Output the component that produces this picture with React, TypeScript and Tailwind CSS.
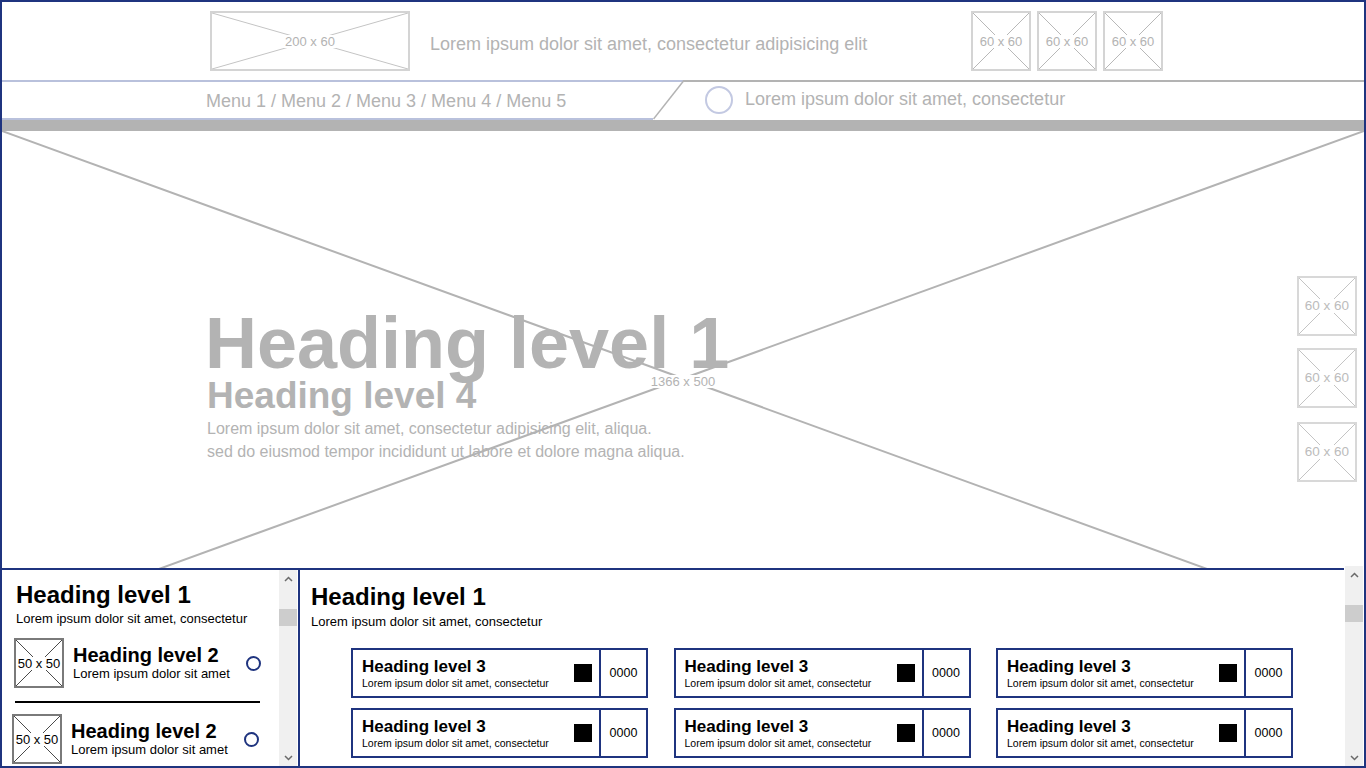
import React from "react";

function XBox({
  className,
  lineColor,
  label,
  labelClass,
  strokeWidth = 1,
}: {
  className: string;
  lineColor: string;
  label: string;
  labelClass: string;
  strokeWidth?: number;
}) {
  return (
    <div className={`relative shrink-0 bg-white ${className}`}>
      <svg
        className="absolute inset-0 h-full w-full"
        viewBox="0 0 100 100"
        preserveAspectRatio="none"
      >
        <line x1="0" y1="0" x2="100" y2="100" stroke={lineColor} strokeWidth={strokeWidth} vectorEffect="non-scaling-stroke" />
        <line x1="100" y1="0" x2="0" y2="100" stroke={lineColor} strokeWidth={strokeWidth} vectorEffect="non-scaling-stroke" />
      </svg>
      <div className="absolute inset-0 flex items-center justify-center">
        <span className={`bg-white px-[1px] leading-none ${labelClass}`}>{label}</span>
      </div>
    </div>
  );
}

function Chevron({ up }: { up: boolean }) {
  return (
    <svg width="9" height="6" viewBox="0 0 9 6">
      {up ? (
        <polyline points="1,5 4.5,1.5 8,5" fill="none" stroke="#6a6a6a" strokeWidth="1.5" />
      ) : (
        <polyline points="1,1 4.5,4.5 8,1" fill="none" stroke="#6a6a6a" strokeWidth="1.5" />
      )}
    </svg>
  );
}

function Scrollbar({ className }: { className: string }) {
  return (
    <div className={`flex w-[18px] shrink-0 flex-col bg-[#f0f0f0] ${className}`}>
      <div className="flex h-[17px] items-center justify-center">
        <Chevron up />
      </div>
      <div className="mt-[22px] h-[17px] bg-[#cdcdcd]" />
      <div className="flex-1" />
      <div className="flex h-[17px] items-center justify-center">
        <Chevron up={false} />
      </div>
    </div>
  );
}

function Circle({ className }: { className: string }) {
  return <div className={`shrink-0 rounded-full ${className}`} />;
}

function ListItem({ shift }: { shift: boolean }) {
  return (
    <div className={`flex items-center ${shift ? "-ml-[2px]" : ""}`}>
      <XBox
        className="h-[50px] w-[50px] border-2 border-[#7a7a7a]"
        lineColor="#4a4a4a"
        label="50 x 50"
        labelClass="text-[13px] text-black"
      />
      <div className="ml-[9px] flex flex-1 flex-col">
        <div className="text-[20px] font-bold leading-[22px] text-black">Heading level 2</div>
        <div className="text-[13px] leading-[16px] text-black">Lorem ipsum dolor sit amet</div>
      </div>
      <Circle className="mr-[1px] h-[15px] w-[15px] border-2 border-[#1f347f]" />
    </div>
  );
}

function Card() {
  return (
    <div className="flex h-[50px] border-2 border-[#1f347f]">
      <div className="flex flex-1 items-center border-r-2 border-[#1f347f] pl-[9px] pr-[7px]">
        <div className="flex flex-1 flex-col">
          <div className="text-[17px] font-bold leading-[20px] text-black">Heading level 3</div>
          <div className="text-[10.5px] leading-[13px] text-black">Lorem ipsum dolor sit amet, consectetur</div>
        </div>
        <div className="h-[18px] w-[18px] bg-black" />
      </div>
      <div className="flex w-[45px] items-center justify-center text-[12.5px] text-black">0000</div>
    </div>
  );
}

export default function App() {
  return (
    <div className="flex h-[768px] w-[1366px] flex-col overflow-hidden border-2 border-[#1f347f] bg-white font-['Liberation_Sans',Arial,sans-serif]">
      {/* Header */}
      <div className="flex h-[78px] shrink-0 items-center pl-[208px]">
        <XBox
          className="h-[60px] w-[200px] border-2 border-[#d4d4d4]"
          lineColor="#c4c4c4"
          label="200 x 60"
          labelClass="text-[13px] text-[#b3b3b3]"
        />
        <div className="ml-[20px] w-[541px] pt-[6px] text-[18px] text-[#b3b3b3]">
          Lorem ipsum dolor sit amet, consectetur adipisicing elit
        </div>
        <div className="flex gap-[6px]">
          {[0, 1, 2].map((i) => (
            <XBox
              key={i}
              className="h-[60px] w-[60px] border-2 border-[#d4d4d4]"
              lineColor="#b8b8b8"
              label="60 x 60"
              labelClass="text-[13px] text-[#b3b3b3]"
            />
          ))}
        </div>
      </div>

      {/* Nav */}
      <div className="flex h-[40px] shrink-0">
        <div className="flex w-[651px] items-center border-y-2 border-[#b9c1dc] pl-[204px] pt-[2px] text-[18px] text-[#b3b3b3]">
          Menu 1 / Menu 2 / Menu 3 / Menu 4 / Menu 5
        </div>
        <svg width="32" height="40" viewBox="0 0 32 40" className="shrink-0">
          <line x1="0" y1="1" x2="30" y2="1" stroke="#b9c1dc" strokeWidth="2" />
          <line x1="30" y1="1" x2="32" y2="1" stroke="#b3b3b3" strokeWidth="2" />
          <line x1="30.5" y1="1" x2="0.5" y2="39" stroke="#b3b3b3" strokeWidth="1.5" />
        </svg>
        <div className="flex flex-1 items-center border-t-2 border-[#b3b3b3] pb-[3px]">
          <Circle className="ml-[20px] h-[28px] w-[28px] border-2 border-[#c3c9e2]" />
          <div className="ml-[12px] text-[18px] text-[#b3b3b3]">Lorem ipsum dolor sit amet, consectetur</div>
        </div>
      </div>

      {/* Gray bar */}
      <div className="h-[11px] shrink-0 bg-[#b3b3b3]" />

      {/* Hero */}
      <div className="relative h-[437px] shrink-0 overflow-hidden">
        <svg className="absolute left-0 top-0" width="1362" height="500" viewBox="0 0 1362 500">
          <line x1="0" y1="0" x2="1362" y2="495" stroke="#b3b3b3" strokeWidth="2" />
          <line x1="1362" y1="0" x2="0" y2="495" stroke="#b3b3b3" strokeWidth="2" />
        </svg>
        <div className="absolute left-0 top-0 flex h-[500px] w-[1362px] items-center justify-center">
          <span className="bg-white px-[1px] text-[13px] leading-none text-[#b3b3b3]">1366 x 500</span>
        </div>
        <div className="relative flex h-full">
          <div className="flex flex-1 flex-col pl-[203px] pt-[176px] text-[#b3b3b3]">
            <div className="text-[72px] font-bold leading-[72px]">Heading level 1</div>
            <div className="-mt-[1px] ml-[2px] text-[37px] font-bold leading-[36px]">Heading level 4</div>
            <div className="ml-[2px] mt-[3px] text-[16px] leading-[23px]">
              Lorem ipsum dolor sit amet, consectetur adipisicing elit, aliqua.
              <br />
              sed do eiusmod tempor incididunt ut labore et dolore magna aliqua.
            </div>
          </div>
          <div className="flex flex-col pr-[7px] pt-[145px]">
            <XBox
              className="h-[60px] w-[60px] border-2 border-[#d8d8d8]"
              lineColor="#c4c4c4"
              label="60 x 60"
              labelClass="text-[13.5px] text-[#bcbcbc]"
            />
            <XBox
              className="mt-[12px] h-[60px] w-[60px] border-2 border-[#d8d8d8]"
              lineColor="#c4c4c4"
              label="60 x 60"
              labelClass="text-[13.5px] text-[#bcbcbc]"
            />
            <XBox
              className="mt-[14px] h-[60px] w-[60px] border-2 border-[#d8d8d8]"
              lineColor="#c4c4c4"
              label="60 x 60"
              labelClass="text-[13.5px] text-[#bcbcbc]"
            />
          </div>
        </div>
      </div>

      {/* Bottom */}
      <div className="relative flex flex-1">
        <div className="flex w-[298px] shrink-0 border-r-2 border-t-2 border-[#1f347f]">
          <div className="flex flex-1 flex-col pl-[12px] pr-[17px] pt-[11px]">
            <div className="ml-[2px] text-[24px] font-bold leading-[28px] text-black">Heading level 1</div>
            <div className="ml-[2px] mt-[2px] text-[13px] leading-[16px] text-black">Lorem ipsum dolor sit amet, consectetur</div>
            <div className="mt-[11px]">
              <ListItem shift={false} />
            </div>
            <div className="ml-[1px] mr-[2px] mt-[13px] h-[2px] bg-black" />
            <div className="mt-[11px] pr-[2px]">
              <ListItem shift />
            </div>
          </div>
          <Scrollbar className="mr-[1px]" />
        </div>
        <div className="flex flex-1 flex-col border-t-2 border-[#1f347f] pl-[11px] pt-[13px]">
          <div className="text-[24px] font-bold leading-[28px] text-black">Heading level 1</div>
          <div className="mt-[3px] text-[13px] leading-[16px] text-black">Lorem ipsum dolor sit amet, consectetur</div>
          <div className="ml-[40px] mt-[18px] grid grid-cols-[297px_297px_297px] gap-x-[25.5px] gap-y-[10px]">
            <Card />
            <Card />
            <Card />
            <Card />
            <Card />
            <Card />
          </div>
        </div>
        <Scrollbar className="-mt-[2px] ml-[1px] mr-[1px]" />
      </div>
    </div>
  );
}
